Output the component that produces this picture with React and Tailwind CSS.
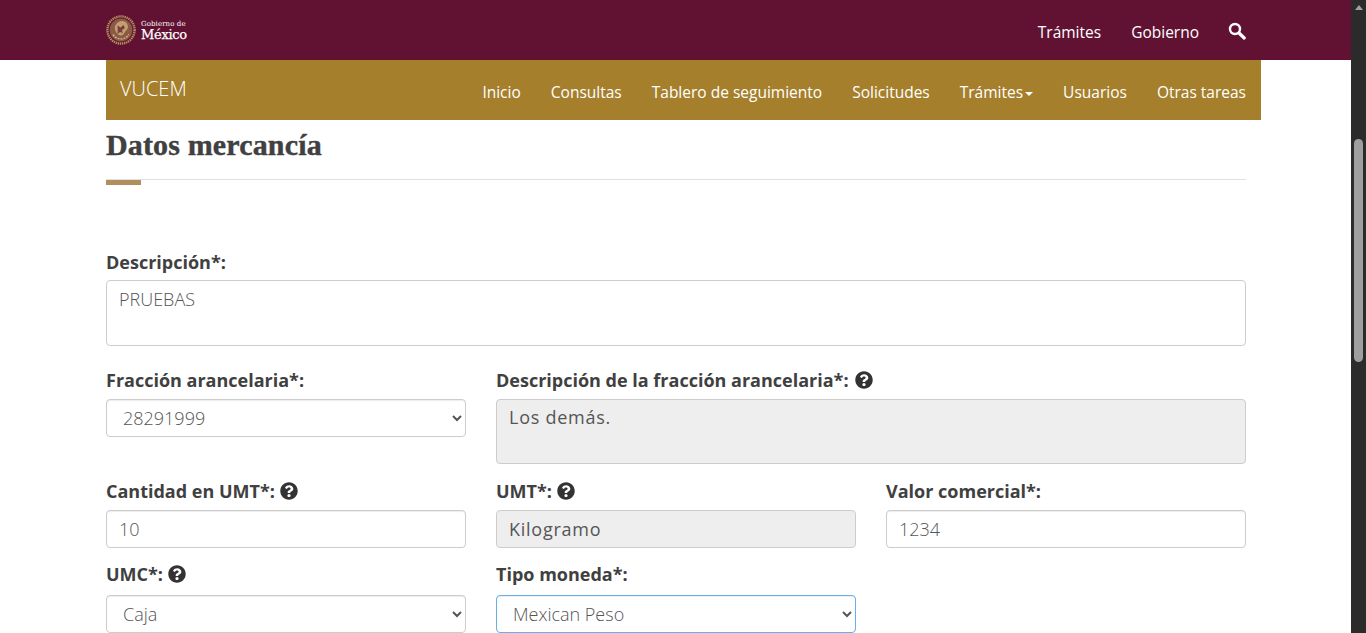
import React from 'react';
import { FaQuestionCircle } from 'react-icons/fa';

const navItems = ['Inicio', 'Consultas', 'Tablero de seguimiento', 'Solicitudes', 'Trámites', 'Usuarios', 'Otras tareas'];

const fieldClass = 'h-[38px] w-full rounded border border-[#ccc] bg-white px-3 text-[18px] font-light text-[#555] shadow-[inset_0_1px_1px_rgba(0,0,0,0.075)] outline-none';
const disabledClass = 'w-full rounded border border-[#ccc] bg-[#eee] px-3 text-[18px] tracking-[0.75px] text-[#555] outline-none';

const Seal = () => (
  <svg width="30" height="30" viewBox="0 0 30 30" className="shrink-0">
    <circle cx="15" cy="15" r="13.6" fill="none" stroke="#b38e5d" strokeWidth="2.4" strokeDasharray="1.4 0.7" />
    <circle cx="15" cy="15" r="11.4" fill="#8a5a46" />
    <path d="M9 11c2-4 5-5.5 8-5 3 .6 5 3 5 6 0 2-2 3-3 5-1 2-3 4-5 3.400-3-.8-6-5.400-5-9.400z" fill="#c29f6e" />
    <path d="M11.500 10.500l3 2 3-2.500 1.500 3-3 2 .8 3-2.800-1-2.500 2 .2-4z" fill="#7a3f3c" />
    <path d="M7 19.500c2 3 5 4.500 8 4.500s6-1.500 8-4.500" fill="none" stroke="#d0b184" strokeWidth="1.500" strokeDasharray="2 1" />
  </svg>
);

const Help = ({ className = '' }) => <FaQuestionCircle className={`mb-[2px] inline-block text-[18px] text-[#333] ${className}`} />;

const Label = ({ children }) => (
  <label className="flex h-[19px] items-center text-[18px] font-bold leading-[19px] text-[#404041]">{children}</label>
);

const SelectField = ({ value, className = '' }) => (
  <select defaultValue={value} className={`${fieldClass} ${className}`}>
    <option>{value}</option>
  </select>
);

export default function App() {
  return (
    <div className="flex h-[633px] w-[1366px] overflow-hidden bg-white font-['Open_Sans',sans-serif] text-[#404041]">
      <div className="min-w-0 flex-1">
        {/* top bar */}
        <header className="flex h-[60px] items-center bg-[#611232] pl-[106px] pr-[105px] text-white">
          <Seal />
          <div className="ml-[5px] mt-[1px] font-['DejaVu_Serif',serif] text-white">
            <div className="text-[7px] leading-[8px] tracking-[0.1px]">Gobierno de</div>
            <div className="text-[13px] leading-[13px] tracking-[-0.3px] [-webkit-text-stroke:0.25px_white]">México</div>
          </div>
          <nav className="ml-auto flex items-start gap-[30px] self-stretch pt-[21px] text-[15.5px]">
            <a>Trámites</a>
            <a>Gobierno</a>
            <svg width="18" height="18" viewBox="0 0 18 18" className="-ml-[1px] mt-[1px]" fill="none" stroke="white">
              <circle cx="7" cy="7" r="5" strokeWidth="2.4" />
              <path d="M11 11l5.200 5" strokeWidth="3.200" strokeLinecap="round" />
            </svg>
          </nav>
        </header>

        <div className="ml-[106px] flex h-[60px] w-[1155px] items-center justify-between bg-[#a57f2c] pl-[14px] pr-[15px] text-white">
          <span className="mb-[3px] text-[20px] font-light">VUCEM</span>
          <ul className="mt-[6px] flex gap-[30px] text-[15.5px]">
            {navItems.map((item) => (
              <li key={item} className="flex items-center">
                {item}
                {item === 'Trámites' && <span className="ml-[2px] mt-[2px] border-x-4 border-t-4 border-x-transparent border-t-white" />}
              </li>
            ))}
          </ul>
        </div>

        <main className="ml-[106px] w-[1140px]">
          <h1 className="mt-[8px] font-['Liberation_Serif',serif] text-[30px] font-bold leading-[34px] tracking-[0.15px] text-[#404041] [-webkit-text-stroke:0.4px_#404041]">Datos mercancía</h1>
          <div className="mt-[17px] border-t border-[#e0e0e0]" />
          <div className="h-[5px] w-[35px] bg-[#b38e5d]" />

          <div className="mt-[68px]"><Label>Descripción*:</Label></div>
          <textarea
            readOnly
            defaultValue="PRUEBAS"
            className="mt-[8px] block h-[66px] w-full resize-none rounded border border-[#ccc] px-3 py-[5px] text-[18px] font-light text-[#555] outline-none"
          />

          <div className="mt-[25px] grid grid-cols-3 gap-x-[30px]">
            <div>
              <Label>Fracción arancelaria*:</Label>
              <SelectField value="28291999" className="mt-[9px]" />
            </div>
            <div className="col-span-2">
              <Label>Descripción de la fracción arancelaria*:<Help className="ml-1.5" /></Label>
              <textarea readOnly defaultValue="Los demás." className={`mt-[9px] block h-[65px] resize-none py-[4px] ${disabledClass}`} />
            </div>
          </div>

          <div className="mt-[18px] grid grid-cols-3 gap-x-[30px]">
            <div>
              <Label>Cantidad en UMT*:<Help className="ml-[5px]" /></Label>
              <input readOnly defaultValue="10" className={`mt-[9px] block ${fieldClass}`} />
            </div>
            <div>
              <Label>UMT*:<Help className="ml-[5px]" /></Label>
              <input readOnly defaultValue="Kilogramo" className={`mt-[9px] block h-[38px] ${disabledClass}`} />
            </div>
            <div>
              <Label>Valor comercial*:</Label>
              <input readOnly defaultValue="1234" className={`mt-[9px] block ${fieldClass}`} />
            </div>
          </div>

          <div className="mt-[17px] grid grid-cols-3 gap-x-[30px]">
            <div>
              <Label>UMC*:<Help className="ml-[5px]" /></Label>
              <SelectField value="Caja" className="mt-[11px]" />
            </div>
            <div>
              <Label>Tipo moneda*:</Label>
              <SelectField value="Mexican Peso" className="mt-[11px] !border-[#66afe9] shadow-[inset_0_1px_1px_rgba(0,0,0,0.075),0_0_8px_rgba(102,175,233,0.6)]" />
            </div>
          </div>
        </main>
      </div>

      {/* browser scrollbar */}
      <div className="flex w-[15px] shrink-0 flex-col items-center bg-[#2b2b2b]">
        <span className="mt-[5px] border-x-[4px] border-b-[5px] border-x-transparent border-b-[#a0a0a0]" />
        <div className="mt-[129px] h-[223px] w-[9px] rounded-full bg-[#9f9f9f]" />
      </div>
    </div>
  );
}
